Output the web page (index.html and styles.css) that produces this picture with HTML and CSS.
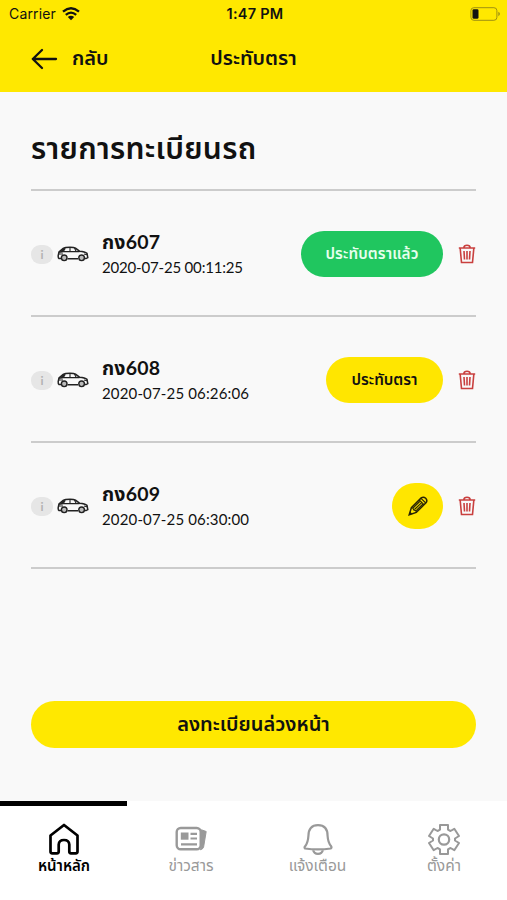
FILE: index.html
```html
<!DOCTYPE html>
<html lang="th">
<head>
<meta charset="utf-8">
<title>ประทับตรา</title>
<link rel="stylesheet" href="styles.css">
</head>
<body>
<svg class="defs" width="0" height="0" aria-hidden="true">
  <symbol id="car" viewBox="0 0 32 16">
    <path d="M4 12.5H2Q1 12 1.2 9.5L2 6L6.2 2.4Q8 1.2 13 1.2Q17 1.2 18.5 2.2L22.5 5.2Q28 5.7 30 7.4L30.8 11.6L29 12.6H27M10.5 12.7H21" fill="none" stroke="#222" stroke-width="1.5"/>
    <path d="M1.5 7L6.2 2.4L8.3 2L5.8 6.5Z" fill="#222"/>
    <path d="M6 5.6H22.5M8.2 2.5L6.3 5.5M13 1.5V5.5M17.5 2L19.2 5.5M2 8H6M27 8L30 8.7" fill="none" stroke="#222" stroke-width="1.1"/>
    <circle cx="7.2" cy="11.8" r="2.8" fill="#bbb" stroke="#222" stroke-width="1.4"/>
    <circle cx="24.6" cy="11.8" r="2.8" fill="#bbb" stroke="#222" stroke-width="1.4"/>
  </symbol>
  <symbol id="trash" viewBox="0 0 18 20">
    <path d="M.8 4H17.2M5.8 3.7Q6 1.2 9 1.2Q12 1.2 12.2 3.7M2.2 4.5L3.5 18.5H14.5L15.8 4.5M6 7L6.5 15.5M9 7V15.5M12 7L11.5 15.5" fill="none" stroke="#c9403f" stroke-width="1.6"/>
  </symbol>
</svg>
<header class="header">
  <div class="status">
    <div class="carrier"><span>Carrier</span>
      <svg width="18" height="14" viewBox="0 0 18 14"><path d="M1 4.6Q9-2.2 17 4.6M3.8 7.8Q9 3.4 14.2 7.8" fill="none" stroke="#111" stroke-width="2.3"/><path d="M5.8 10Q9 7.4 12.2 10L9 13.3Z" fill="#111"/></svg>
    </div>
    <div class="clock">1:47 PM</div>
    <svg class="battery" width="31" height="14" viewBox="0 0 31 14"><rect x=".9" y=".7" width="26" height="12.6" rx="3" fill="none" stroke="#9f9012" stroke-width="1"/><rect x="2.5" y="2.3" width="6" height="9.4" rx="1.3" fill="#111"/><path d="M28.3 4.8Q31.6 7 28.3 9.2Z" fill="#9f9012"/></svg>
  </div>
  <div class="nav">
    <div class="back">
      <svg width="27" height="22" viewBox="0 0 27 22"><path d="M25 11H1.8M11 2L1.8 11L11 20" fill="none" stroke="#111" stroke-width="2.3" stroke-linecap="round" stroke-linejoin="round"/></svg>
      <span class="back-label">กลับ</span>
    </div>
    <div class="title">ประทับตรา</div>
  </div>
</header>
<main class="content">
  <h1 class="heading"><span>รายการทะเบียนรถ</span></h1>
  <ul class="list">
    <li class="row">
      <span class="info">i</span><svg class="car" width="32" height="16"><use href="#car"/></svg>
      <div class="details"><div class="plate">กง607</div><div class="date narrow">2020-07-25 00:11:25</div></div>
      <button class="pill done"><span>ประทับตราแล้ว</span></button>
      <svg class="trash" width="18" height="20"><use href="#trash"/></svg>
    </li>
    <li class="row">
      <span class="info">i</span><svg class="car" width="32" height="16"><use href="#car"/></svg>
      <div class="details"><div class="plate">กง608</div><div class="date">2020-07-25 06:26:06</div></div>
      <button class="pill stamp"><span>ประทับตรา</span></button>
      <svg class="trash" width="18" height="20"><use href="#trash"/></svg>
    </li>
    <li class="row">
      <span class="info">i</span><svg class="car" width="32" height="16"><use href="#car"/></svg>
      <div class="details"><div class="plate">กง609</div><div class="date">2020-07-25 06:30:00</div></div>
      <button class="pill edit"><svg width="20" height="20" viewBox="0 0 20 20"><path d="M1.2 18.8L3.4 11.6L13.2 1.9Q15.5.3 17.7 2.3Q19.8 4.5 18 6.8L8.3 16.4Z" fill="none" stroke="#292505" stroke-width="1.5"/><path d="M3.4 11.8L5 12.2L5.8 14.1L7.9 14.8L8.3 16.4M11.2 4L16 8.7M13 2.3L17.8 7M5 12.2L11.7 5.5M6.5 13.5L13.4 6.8M7.9 14.8L15 8" fill="none" stroke="#292505" stroke-width="1.1"/><path d="M1.2 18.8L2 15.5L4.5 18Z" fill="#292505"/></svg></button>
      <svg class="trash" width="18" height="20"><use href="#trash"/></svg>
    </li>
  </ul>
  <button class="register"><span>ลงทะเบียนล่วงหน้า</span></button>
</main>
<nav class="tabs">
  <div class="tab active">
    <svg width="32" height="32" viewBox="0 0 32 32"><path d="M2.5 12.5L16 2L29.5 12.5V28.5Q29.5 30.3 27.7 30.3H23Q21.3 30.3 21.3 28.5V21.5Q21 17 16 17Q11 17 10.7 21.5V28.5Q10.7 30.3 9 30.3H4.3Q2.5 30.3 2.5 28.5Z" fill="none" stroke="#000" stroke-width="2.7" stroke-linejoin="round"/></svg>
    <span class="t1">หน้าหลัก</span>
  </div>
  <div class="tab">
    <svg width="32" height="32" viewBox="0 0 32 32"><rect x="1.7" y="5" width="24" height="21.3" rx="4" fill="none" stroke="#999" stroke-width="2.4"/><path d="M26.5 6.8L31.2 8.5L28.6 24Q27.8 26.4 25.3 26.8Q26.5 25 26.5 23Z" fill="#999" stroke="#999" stroke-width="1"/><rect x="5.8" y="9.5" width="7.7" height="7.2" fill="#999"/><path d="M15.5 10.8H22M15.5 15.5H22M6 21.3H22" stroke="#999" stroke-width="2.2"/></svg>
    <span class="t2">ข่าวสาร</span>
  </div>
  <div class="tab">
    <svg width="32" height="32" viewBox="0 0 32 32"><path d="M3 25.5Q2 24.5 3.3 23Q6 19.5 6.4 13Q6.4 2.2 16 2.2Q25.6 2.2 25.6 13Q26 19.5 29 23Q30 24.5 28.8 25.5Q16 27.4 3 25.5ZM11 26.7Q12 30.8 16 30.8Q20 30.8 21 26.7" fill="none" stroke="#999" stroke-width="2.2" stroke-linejoin="round"/></svg>
    <span class="t3">แจ้งเตือน</span>
  </div>
  <div class="tab">
    <svg width="32" height="32" viewBox="0 0 32 32"><path d="M12 2H20V6.7L22.5 8L26.3 5.8L31 13L27 15.5V17.5L31 20L26.3 27.2L22.5 25L20 26.3V31H12V26.3L9.5 25L5.7 27.2L1 20L5 17.5V15.5L1 13L5.7 5.8L9.5 8L12 6.7Z" fill="none" stroke="#999" stroke-width="2" stroke-linejoin="round"/><circle cx="16" cy="16.5" r="5.2" fill="none" stroke="#999" stroke-width="2.2"/></svg>
    <span class="t4">ตั้งค่า</span>
  </div>
</nav>
</body>
</html>
```
FILE: styles.css
```css
* { box-sizing: border-box; }
body { margin: 0; width: 507px; height: 900px; overflow: hidden; display: flex; flex-direction: column; background: #f9f9f9; color: #111; font-family: Lato, "Noto Sans Thai", "Noto Sans", sans-serif; }
.defs { display: block; position: absolute; }
button { border: 0; padding: 0; font: inherit; color: inherit; }
span, .title, .plate, .date { white-space: nowrap; }
.header { height: 92px; background: #ffe800; flex: none; }
.status { height: 27px; display: grid; grid-template-columns: 1fr auto 1fr; align-items: center; padding: 0 6px 0 9px; font-family: Inter, sans-serif; font-size: 14px; }
.carrier { display: flex; gap: 6px; align-items: center; letter-spacing: 0.15px; }
.clock { font-weight: 600; font-size: 14.5px; letter-spacing: 0.25px; }
.battery { justify-self: end; }
.nav { height: 64px; display: grid; grid-template-columns: 1fr auto 1fr; align-items: center; padding: 0 31px; font-size: 20px; font-weight: 600; }
.back { display: flex; gap: 14px; align-items: center; }
.content { flex: none; height: 709px; padding: 0 31px; }
.heading { margin: 0; height: 99px; border-bottom: 2px solid #ccc; display: flex; align-items: center; padding-top: 18px; font-size: 30px; font-weight: 600; letter-spacing: 0.3px; }
.list { list-style: none; margin: 0; padding: 0; }
.row { height: 126px; border-bottom: 2px solid #ccc; display: flex; align-items: center; padding-top: 2px; }
.info { width: 22px; height: 19px; border-radius: 9px; background: #e6e6e6; color: #b2b2b2; display: flex; align-items: center; justify-content: center; font-size: 12px; font-weight: 700; }
.car { margin-left: 4px; }
.details { margin-left: 13px; flex: 1; }
.plate { height: 26px; line-height: 26px; font-size: 19.5px; font-weight: 700; letter-spacing: 0.2px; }
.date { height: 25px; line-height: 25px; font-size: 15px; letter-spacing: 0.15px; }
.narrow { letter-spacing: -0.18px; }
.pill { height: 46px; border-radius: 23px; display: flex; align-items: center; justify-content: center; font-size: 15.3px; font-weight: 600; background: #ffe600; }
.done { width: 142px; background: #20c65f; color: #e6ffed; letter-spacing: 0.1px; }
.stamp { width: 117px; }
.edit { width: 51px; }
.trash { margin: 0 0 0 15px; }
.register { margin-top: 132px; width: 445px; height: 47px; border-radius: 24px; background: #ffe800; display: flex; align-items: center; justify-content: center; font-size: 20px; font-weight: 600; padding-top: 1px; }
.tabs { height: 99px; background: #fff; display: grid; grid-template-columns: 127px 127px 126px 127px; flex: none; }
.tab { border-top: 5px solid transparent; display: flex; flex-direction: column; align-items: center; padding: 17px 0 0 1px; color: #999; font-size: 15.5px; }
.tab span { line-height: 21px; }
.active { border-color: #000; color: #000; font-size: 15px; font-weight: 600; }
```
